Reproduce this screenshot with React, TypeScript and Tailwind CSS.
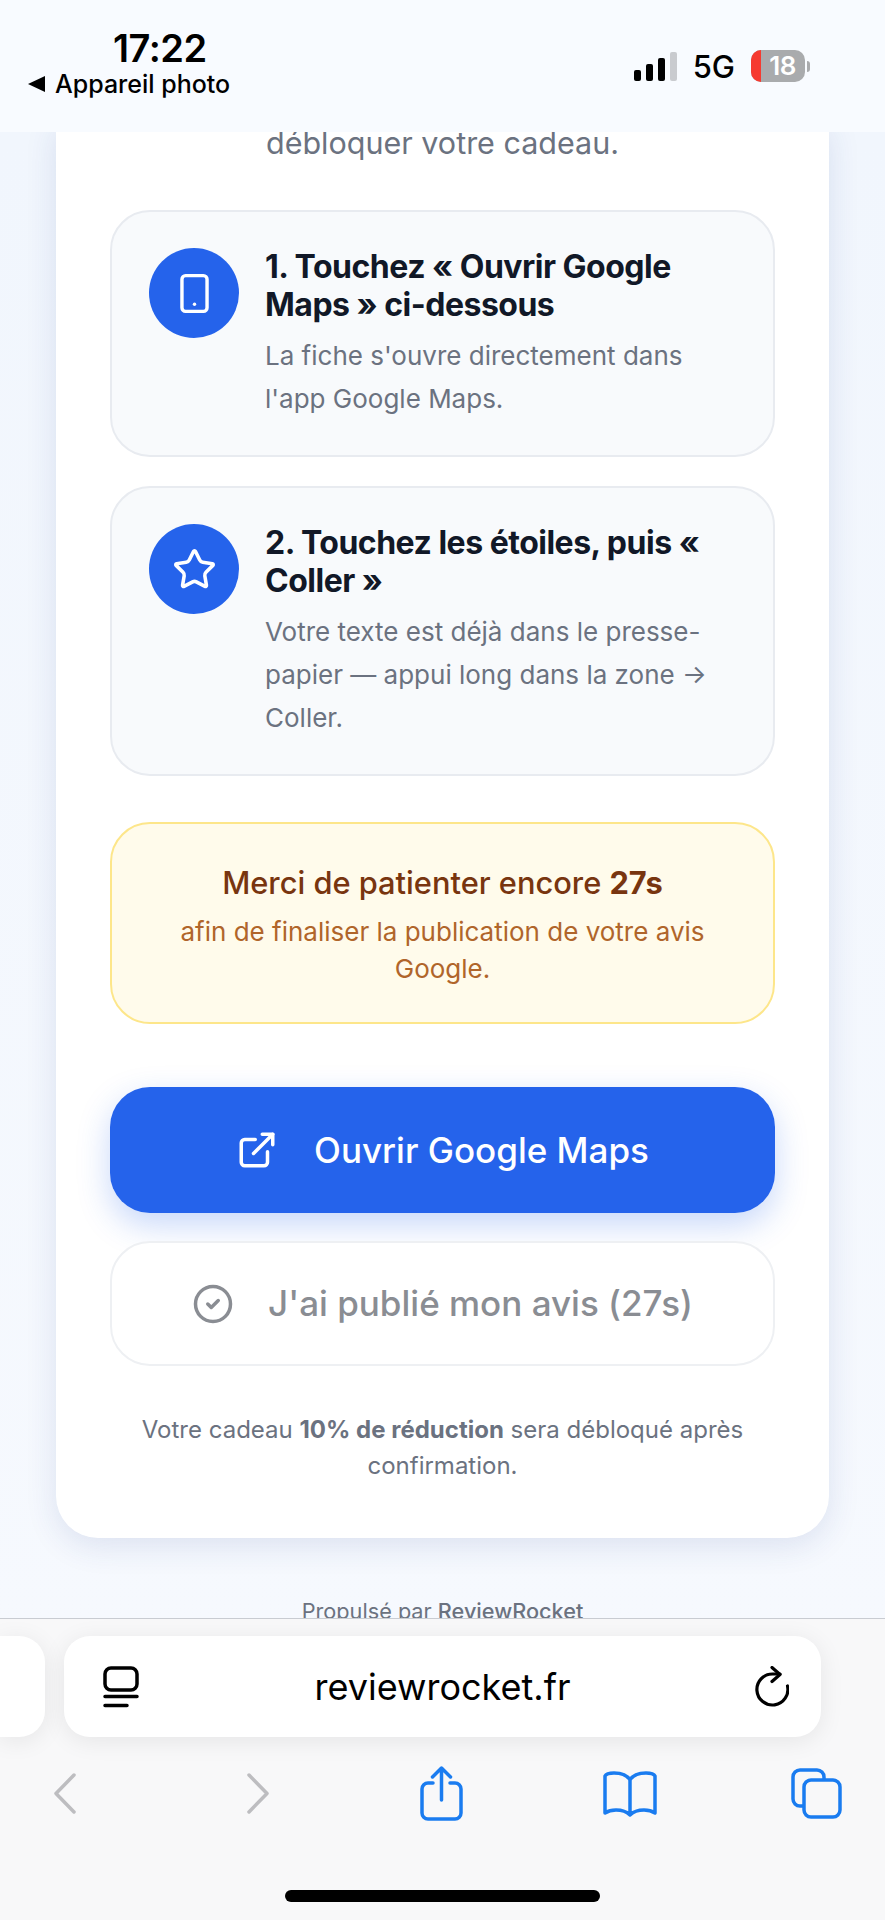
import React from 'react';
import { Smartphone, Star, ExternalLink, CircleCheck } from 'lucide-react';

const steps = [
  {
    icon: <Smartphone size={43} strokeWidth={1.9} />,
    title: '1. Touchez « Ouvrir Google Maps » ci-dessous',
    text: "La fiche s'ouvre directement dans l'app Google Maps.",
  },
  {
    icon: <Star size={45} strokeWidth={1.9} />,
    title: '2. Touchez les étoiles, puis « Coller »',
    text: 'Votre texte est déjà dans le presse-papier — appui long dans la zone → Coller.',
  },
];

function StatusBar() {
  return (
    <div className="relative z-10 h-[132px] shrink-0 bg-[#f8fbff] flex justify-between pl-[28px] pr-[75px] font-['Inter',sans-serif] text-black">
      <div className="flex flex-col items-start pt-[28px]">
        <div className="ml-[85px] text-[38px] leading-[40px] font-semibold tracking-[-0.5px]">17:22</div>
        <div className="flex items-center gap-[10px] text-[25px] leading-[30px] font-medium mt-[1px]">
          <span className="w-0 h-0 border-y-[8px] border-y-transparent border-r-[17px] border-r-black" />
          <span>Appareil photo</span>
        </div>
      </div>
      <div className="flex items-center gap-[16px]">
        <div className="flex items-end gap-[5px] h-[29px]">
          <span className="w-[7px] h-[11px] rounded-[2px] bg-black" />
          <span className="w-[7px] h-[17px] rounded-[2px] bg-black" />
          <span className="w-[7px] h-[23px] rounded-[2px] bg-black" />
          <span className="w-[7px] h-[29px] rounded-[2px] bg-[#c9cbcf]" />
        </div>
        <span className="text-[31px] font-medium leading-none">5G</span>
        <div className="flex items-center gap-[2px]">
          <div className="relative w-[54px] h-[32px] rounded-[10px] bg-[#a9abad] overflow-hidden flex items-center justify-center">
            <span className="absolute left-0 top-0 bottom-0 w-[10px] bg-[#f63a30]" />
            <span className="relative text-white text-[26px] font-semibold leading-none pl-[9px] tracking-[-0.5px]">18</span>
          </div>
          <span className="w-[3px] h-[11px] rounded-r-full bg-[#a9abad]" />
        </div>
      </div>
    </div>
  );
}

function BrowserBar() {
  return (
    <div className="relative z-10 h-[302px] shrink-0 bg-[#f8f8f9] border-t border-[#c9ccd2] overflow-hidden">
      <div className="flex pt-[17px] pl-[64px] pr-[64px]">
        <div className="absolute left-0 top-[17px] w-[45px] h-[101px] bg-white rounded-r-[26px] shadow-[0_4px_24px_rgba(0,0,0,0.08)]" />
        <div className="flex-1 h-[101px] bg-white rounded-[26px] shadow-[0_4px_24px_rgba(0,0,0,0.08)] flex items-center justify-between pl-[39px] pr-[32px]">
          <svg width="36" height="42" viewBox="0 0 36 42" fill="none" stroke="black" strokeWidth="3.5" strokeLinecap="round">
            <rect x="2" y="2" width="32" height="22" rx="6" />
            <path d="M2 30.5h32M2 39.5h22" />
          </svg>
          <span className="font-['Inter',sans-serif] text-[36px] leading-none text-black pr-[7px]">reviewrocket.fr</span>
          <svg width="36" height="42" viewBox="0 0 36 42" fill="none" stroke="black" strokeWidth="3.2" strokeLinecap="round" strokeLinejoin="round">
            <path d="M34.5 20A15.5 15.500 0 1 1 19.5 8H27" />
            <path d="M19 1.5l8 7-8 7" />
          </svg>
        </div>
      </div>
      <div className="flex items-center pl-[54px] mt-[29px]">
        <svg width="22" height="41" viewBox="0 0 22 41" fill="none" stroke="#bdbdc0" strokeWidth="3.5" strokeLinecap="round" strokeLinejoin="round">
          <path d="M20 2L2 20.5 20 39" />
        </svg>
        <svg className="ml-[171px]" width="22" height="41" viewBox="0 0 22 41" fill="none" stroke="#bdbdc0" strokeWidth="3.5" strokeLinecap="round" strokeLinejoin="round">
          <path d="M2 2l18 18.5L2 39" />
        </svg>
        <svg className="ml-[151px]" width="43" height="55" viewBox="0 0 43 55" fill="none" stroke="#1a7cf0" strokeWidth="3.5" strokeLinecap="round" strokeLinejoin="round">
          <path d="M13 17H8a6 6 0 0 0-6 6v24a6 6 0 0 0 6 6h27a6 6 0 0 0 6-6V23a6 6 0 0 0-6-6h-5" />
          <path d="M21.5 34V3M12.500 11l9-9 9 9" />
        </svg>
        <svg className="ml-[140px]" width="54" height="46" viewBox="0 0 54 46" fill="none" stroke="#1a7cf0" strokeWidth="3.5" strokeLinecap="round" strokeLinejoin="round">
          <path d="M27 9C24 4 18 2 11 2 6 2 3 3 2 5v37c3-2 7-3 11-3 6 0 11 2 14 5 3-3 8-5 14-5 4 0 8 1 11 3V5c-1-2-4-3-9-3-7 0-13 2-16 7zM27 9v35" />
        </svg>
        <svg className="ml-[134px]" width="51" height="51" viewBox="0 0 51 51" fill="none" stroke="#1a7cf0" strokeWidth="3.5" strokeLinejoin="round">
          <path d="M12 38H9a7 7 0 0 1-7-7V9a7 7 0 0 1 7-7h17a7 7 0 0 1 7 7v3" />
          <rect x="13" y="12" width="36" height="37" rx="7" />
        </svg>
      </div>
      <div className="absolute left-[285px] top-[271px] w-[315px] h-[12px] rounded-full bg-black" />
    </div>
  );
}

export default function App() {
  return (
    <div className="h-[1920px] w-[885px] overflow-hidden flex flex-col bg-[#f4f8fe] font-['Inter',sans-serif]">
      <StatusBar />
      <div className="flex-1 overflow-hidden px-[56px] bg-gradient-to-b from-[#f1f6fd] to-[#f6f9fe]">
        <div className="bg-white rounded-b-[42px] shadow-[0_8px_32px_rgba(30,58,138,0.12)] pb-[54px] px-[54px]">
          <p className="text-center text-[30.5px] leading-[44px] text-[#6b7280] -mt-[11px] mb-[45px]">débloquer votre cadeau.</p>

          <div className="flex flex-col gap-[29px]">
            {steps.map((step) => (
              <div key={step.title} className="flex gap-[26px] bg-[#f8fafc] border-2 border-[#e8ebf0] rounded-[40px] pt-[36px] pb-[35px] pl-[37px] pr-[36px]">
                <div className="w-[90px] h-[90px] rounded-full bg-[#2563eb] text-white flex items-center justify-center shrink-0">
                  {step.icon}
                </div>
                <div>
                  <h3 className="text-[32px] leading-[38px] font-bold text-[#111827] tracking-[-0.5px]">{step.title}</h3>
                  <p className="text-[26px] leading-[43px] text-[#6b7280] mt-[10px]">{step.text}</p>
                </div>
              </div>
            ))}
          </div>

          <div className="mt-[46px] bg-[#fffbeb] border-2 border-[#fde68a] rounded-[40px] px-[40px] pt-[39px] pb-[35px] text-center">
            <p className="text-[30.8px] leading-[40px] font-medium text-[#78350f]">
              Merci de patienter encore <span className="font-bold">27s</span>
            </p>
            <p className="text-[26px] leading-[37px] text-[#b0652a] mt-[10px]">
              afin de finaliser la publication de votre avis Google.
            </p>
          </div>

          <button className="mt-[63px] w-full h-[126px] rounded-[40px] bg-[#2563eb] text-white flex items-center justify-center gap-[36px] text-[35px] font-medium shadow-[0_12px_32px_rgba(37,99,235,0.25)]">
            <ExternalLink size={42} strokeWidth={2} />
            Ouvrir Google Maps
          </button>

          <button className="mt-[28px] w-full h-[125px] rounded-[40px] bg-white border-2 border-[#eef0f3] text-[#8a8d93] flex items-center justify-center gap-[34px] text-[35px] font-medium">
            <CircleCheck size={42} strokeWidth={2} />
            J'ai publié mon avis (27s)
          </button>

          <p className="mt-[46px] text-center text-[24px] leading-[36px] text-[#6b7280]">
            Votre cadeau <span className="font-bold">10% de réduction</span> sera débloqué après confirmation.
          </p>
        </div>
        <p className="mt-[59px] text-center text-[21.7px] leading-[28px] text-[#6b7280]">
          Propulsé par <span className="font-medium">ReviewRocket</span>
        </p>
      </div>
      <BrowserBar />
    </div>
  );
}
